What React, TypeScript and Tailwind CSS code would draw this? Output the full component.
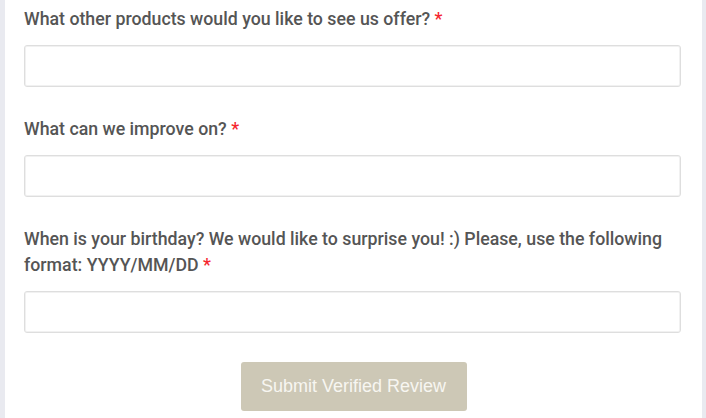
import { useState } from 'react'

type Field = { id: string; label: string }

const fields: Field[] = [
  { id: 'products', label: 'What other products would you like to see us offer?' },
  { id: 'improve', label: 'What can we improve on?' },
  {
    id: 'birthday',
    label: 'When is your birthday? We would like to surprise you! :) Please, use the following format: YYYY/MM/DD',
  },
]

export default function App() {
  const [values, setValues] = useState<Record<string, string>>({})

  return (
    <div className="flex h-[418px] w-[706px] overflow-hidden bg-white">
      <div className="w-[5px] shrink-0 bg-[#e9eaf0]" />
      <form
        className="flex flex-1 flex-col pt-[6px] pr-[21px] pl-[19px] font-['Roboto',sans-serif]"
        onSubmit={(e) => e.preventDefault()}
      >
        {fields.map((f) => (
          <div key={f.id} className="mb-[29px]">
            <label htmlFor={f.id} className="block text-[17.75px] leading-[26px] font-medium text-[#555]">
              {f.label} <span className="text-[#f5262e]">*</span>
            </label>
            <input
              id={f.id}
              value={values[f.id] || ''}
              onChange={(e) => setValues({ ...values, [f.id]: e.target.value })}
              className="mt-[13px] block h-[42px] w-full rounded-[3px] border border-[#dedede] bg-white px-3 shadow-[inset_0_0_0_1px_#f1f1f1] outline-none"
            />
          </div>
        ))}
        <div className="flex justify-center pl-[2px]">
          <button
            type="submit"
            className="h-[49px] w-[226px] rounded-[3px] bg-[#cdc8b6] font-['Liberation_Sans',Arial,sans-serif] text-[18px] text-[#f7f6f1]"
          >
            Submit Verified Review
          </button>
        </div>
      </form>
      <div className="w-[4px] shrink-0 bg-[#e9eaf0]" />
    </div>
  )
}
